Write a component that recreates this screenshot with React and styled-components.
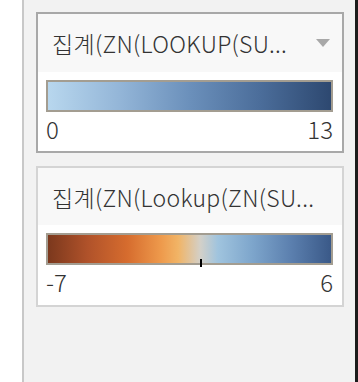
import React from "react";
import styled, { createGlobalStyle } from "styled-components";

const GlobalStyle = createGlobalStyle`
  *, *::before, *::after {
    box-sizing: border-box;
  }
  html, body {
    margin: 0;
    padding: 0;
    background: #ffffff;
  }
  body {
    font-family: "Noto Sans CJK KR", "Noto Sans", sans-serif;
    color: #333333;
  }
`;

const Page = styled.div`
  display: flex;
  height: 382px;
  overflow: hidden;
`;

const Gutter = styled.div`
  width: 22px;
  flex-shrink: 0;
  background: #ffffff;
`;

const Panel = styled.div`
  flex: 1;
  display: flex;
  flex-direction: column;
  gap: 13px;
  padding: 12px 11px 0 12px;
  background: #f2f2f2;
  border-left: 2px solid #c8c8c8;
`;

const EdgeStrip = styled.div`
  width: 3px;
  flex-shrink: 0;
  background: #1c1c1c;
`;

const Card = styled.div`
  border: 2px solid ${(p) => (p.$active ? "#a8a8a8" : "#d4d4d4")};
  background: #ffffff;
`;

const Header = styled.div`
  height: ${(p) => p.$h}px;
  display: flex;
  align-items: center;
  justify-content: space-between;
  padding: 0 12px 0 14px;
  background: #f8f8f8;
`;

const Title = styled.div`
  font-size: 23px;
  font-weight: 300;
  letter-spacing: 0.3px;
  white-space: nowrap;
  overflow: hidden;
  color: #333333;
`;

const Arrow = styled.svg`
  width: 14px;
  height: 8px;
  flex-shrink: 0;
`;

const Body = styled.div`
  padding: 8px 9px 0 8px;
  height: ${(p) => p.$h}px;
`;

const BarWrap = styled.div`
  position: relative;
`;

const Bar = styled.div`
  height: 32px;
  border: 2px solid #a39d91;
  background: ${(p) => p.$gradient};
`;

const Tick = styled.div`
  position: absolute;
  top: 26px;
  width: 2px;
  height: 8px;
  background: #000000;
`;

const Labels = styled.div`
  display: flex;
  justify-content: space-between;
  margin-top: 3px;
  font-size: 24px;
  font-weight: 300;
  line-height: 28px;
  color: #333333;
`;

const blue = "linear-gradient(to right, #b8d7ee 0%, #94b6d8 25%, #6b90bb 50%, #4b6d9a 75%, #2d4870 100%)";
const orangeBlue =
  "linear-gradient(to right, #7b381d 0%, #b0522a 14%, #d66c2e 28%, #ee9a4c 40%, #f1b466 46%, #d3d0c8 53.8%, #a0c4de 60%, #7ea6cc 72%, #5b7fae 86%, #3a5988 100%)";

const legends = [
  { title: "집계(ZN(LOOKUP(SU...", min: 0, max: 13, active: true, arrow: true, gradient: blue, head: 58, body: 79 },
  { title: "집계(ZN(Lookup(ZN(SU...", min: -7, max: 6, active: false, arrow: false, gradient: orangeBlue, head: 57, body: 80 },
];

const Legend = ({ item }) => {
  const zero = item.min < 0 ? (-item.min / (item.max - item.min)) * 100 : null;
  return (
    <Card $active={item.active}>
      <Header $h={item.head}>
        <Title>{item.title}</Title>
        {item.arrow && (
          <Arrow viewBox="0 0 14 8">
            <polygon points="0,0 14,0 7,8" fill="#a8a8a8" />
          </Arrow>
        )}
      </Header>
      <Body $h={item.body}>
        <BarWrap>
          <Bar $gradient={item.gradient} />
          {zero !== null && <Tick style={{ left: `calc(${zero}% - 1px)` }} />}
        </BarWrap>
        <Labels>
          <span>{item.min}</span>
          <span>{item.max}</span>
        </Labels>
      </Body>
    </Card>
  );
};

export default function App() {
  return (
    <>
      <GlobalStyle />
      <Page>
        <Gutter />
        <Panel>
          {legends.map((item) => (
            <Legend key={item.title} item={item} />
          ))}
        </Panel>
        <EdgeStrip />
      </Page>
    </>
  );
}
